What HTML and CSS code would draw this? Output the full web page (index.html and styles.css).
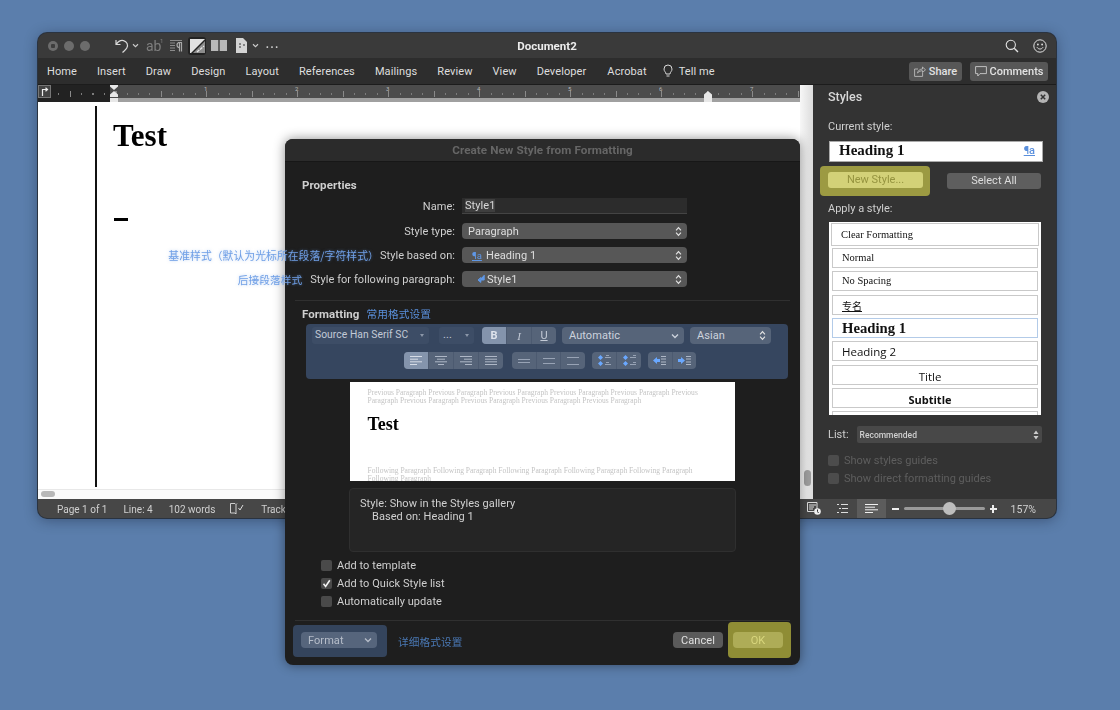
FILE: index.html
```html
<!DOCTYPE html>
<html lang="en">
<head>
<meta charset="UTF-8">
<title>Create New Style from Formatting</title>
<link rel="stylesheet" href="styles.css">
</head>
<body>
<svg class="defs" width="0" height="0">
    <symbol id="updown" viewBox="0 0 8 12"><path d="M1.200 4.600 4 1.600l2.800 3M1.200 7.400 4 10.400l2.800-3" fill="none" stroke="#e4e4e4" stroke-width="1.300"/></symbol>
    <symbol id="down" viewBox="0 0 8 6"><path d="M1 1.500 4 4.500l3-3" fill="none" stroke="currentColor" stroke-width="1.300"/></symbol>
</svg>

<div class="window">
    <div class="titlebar">
        <div class="tools">
            <span class="light light-close"></span><span class="light"></span><span class="light"></span>
            <svg class="t-undo" width="14" height="16" viewBox="0 0 14 16"><path d="M1 2v4.500h4.500M1.300 6.300C3.500 3 6 2 8.500 2.600 12 3.500 13.500 7 11.800 10 10.800 11.800 9 13 7.500 14.500" fill="none" stroke="#d8d8d8" stroke-width="1.200"/></svg>
            <svg class="t-chev" width="7" height="5"><use href="#down"/></svg>
            <span class="t-ab">ab<i>1</i></span>
            <svg class="t-para" width="14" height="14" viewBox="0 0 14 14"><path d="M1 1.500h12M1 4h5M1 6.500h5M1 9h5M1 11.500h5" stroke="#8a8a8a" stroke-width="1.200"/><path d="M9 3.500h4M10.500 3.500v9M12.500 3.500v9M10.500 3.500a2.500 2.500 0 0 0 0 5" fill="none" stroke="#a8a8a8" stroke-width="1.200"/></svg>
            <span class="t-active"><svg width="15" height="14" viewBox="0 0 15 14"><path d="M0 0h15L1 14H0z" fill="#e2e2e2"/><path d="M15 2v12H3z" fill="#8c8c8c"/><path d="M7 13l7-6" stroke="#e8e8e8" stroke-width="1.300" stroke-dasharray="3 1"/></svg></span>
            <svg class="t-cols" width="16" height="11" viewBox="0 0 16 11"><path d="M0 0h7.300v11H0zM8.700 0H16v11H8.700z" fill="#b8b8b8"/></svg>
            <svg class="t-doc" width="11" height="15" viewBox="0 0 11 15"><path d="M0 0h7l4 4v11H0z" fill="#d4d4d4"/><path d="M3 6h2M3 9h2M7 7h2" stroke="#333" stroke-width="1"/></svg>
            <svg class="t-chev2" width="7" height="5"><use href="#down"/></svg>
            <span class="t-dots">&#8943;</span>
        </div>
        <div class="doc-title">Document2</div>
        <div class="title-right">
            <svg width="14" height="14" viewBox="0 0 14 14"><circle cx="5.800" cy="5.800" r="4.600" fill="none" stroke="#e2e2e2" stroke-width="1.100"/><path d="M9.200 9.200 13 13" stroke="#e2e2e2" stroke-width="1.300"/></svg>
            <svg width="14" height="14" viewBox="0 0 14 14"><circle cx="7" cy="7" r="6.200" fill="none" stroke="#e2e2e2" stroke-width="1"/><circle cx="4.900" cy="5.500" r=".9" fill="#e2e2e2"/><circle cx="9.100" cy="5.500" r=".9" fill="#e2e2e2"/><path d="M4 8.300c1.500 2.300 4.500 2.300 6 0" fill="none" stroke="#e2e2e2" stroke-width="1"/></svg>
        </div>
    </div>

    <div class="ribbon">
        <span class="tab">Home</span><span class="tab">Insert</span><span class="tab">Draw</span><span class="tab">Design</span><span class="tab">Layout</span><span class="tab">References</span><span class="tab">Mailings</span><span class="tab">Review</span><span class="tab">View</span><span class="tab">Developer</span><span class="tab">Acrobat</span>
        <span class="tab tell"><svg width="10" height="14" viewBox="0 0 10 14"><path d="M3 10C3 8 1 7.500 1 5a4 4 0 0 1 8 0c0 2.500-2 3-2 5zM3.500 12h3" fill="none" stroke="#d8d8d8" stroke-width="1"/></svg>Tell me</span>
        <div class="ribbon-btns">
            <span class="rb-btn rb-share"><svg width="12" height="11" viewBox="0 0 12 11"><path d="M4 3H.6v7.400h8V7M3.500 7c.5-2.500 2.500-4 5-4V1l3 2.800-3 2.700V4.700C6.500 4.700 5 5.500 3.500 7z" fill="none" stroke="#bbb" stroke-width=".9"/></svg>Share</span>
            <span class="rb-btn rb-comments"><svg width="12" height="11" viewBox="0 0 12 11"><path d="M.6.6h10.800v7H5L2.800 10V7.600H.6z" fill="none" stroke="#ccc" stroke-width=".9"/></svg>Comments</span>
        </div>
    </div>

    <div class="main">
        <div class="doc-col">
            <div class="ruler">
                <span class="ruler-corner"><svg width="8" height="9" viewBox="0 0 8 9"><path d="M1.500 9V2.500H6M4.500.8 6.500 2.500 4.500 4.200" fill="none" stroke="#eee" stroke-width="1.200"/></svg></span>
                <span class="ruler-num">1</span><span class="ruler-num">2</span><span class="ruler-num">3</span><span class="ruler-num">4</span><span class="ruler-num">5</span><span class="ruler-num">6</span><span class="ruler-num">7</span>
                <svg class="marker marker-l" width="8" height="17" viewBox="0 0 8 17"><path d="M0 0h8v1.500L4 5 0 1.500zM4 6l4 3.500V12H0V9.500zM0 13h8v4H0z" fill="#e8e8e8"/></svg>
                <svg class="marker marker-r" width="8" height="17" viewBox="0 0 8 17"><path d="M4 6l4 3.500V17H0V9.500z" fill="#e8e8e8"/></svg>
            </div>
            <div class="page">
                <div class="margin-line"></div>
                <div class="page-text">
                    <h1 class="page-h">Test</h1>
                    <div class="page-dash"></div>
                </div>
            </div>
            <div class="hscroll"><span></span></div>
        </div>
        <div class="vscroll"><span></span></div>

        <div class="styles">
            <div class="styles-head"><span>Styles</span><svg width="12" height="12" viewBox="0 0 12 12"><circle cx="6" cy="6" r="6" fill="#b4b4b4"/><path d="M3.800 3.800l4.400 4.400M8.200 3.800 3.800 8.200" stroke="#333" stroke-width="1.500"/></svg></div>
            <div class="st-label st-current">Current style:</div>
            <div class="current-box"><span>Heading 1</span><a>&#182;a</a></div>
            <div class="st-btns">
                <span class="hl-new"><span class="new-btn">New Style...</span></span>
                <span class="sel-btn">Select All</span>
            </div>
            <div class="st-label st-apply">Apply a style:</div>
            <div class="style-list">
                <div class="si si-clear">Clear Formatting</div>
                <div class="si si-ser si-normal">Normal</div>
                <div class="si si-ser">No Spacing</div>
                <div class="si si-cjk">专名</div>
                <div class="si si-h1">Heading 1</div>
                <div class="si si-h2">Heading 2</div>
                <div class="si si-title">Title</div>
                <div class="si si-sub">Subtitle</div>
                <div class="si si-cut"></div>
            </div>
            <div class="list-row"><span>List:</span><span class="list-sel">Recommended<svg width="6" height="10" viewBox="0 0 6 10"><path d="M3 .5 5.500 4H.5zM3 9.500.5 6h5z" fill="#ccc"/></svg></span></div>
            <div class="guide"><i></i>Show styles guides</div>
            <div class="guide"><i></i>Show direct formatting guides</div>
        </div>
    </div>

    <div class="status">
        <span class="s-page">Page 1 of 1</span><span class="s-line">Line: 4</span><span class="s-words">102 words</span>
        <svg class="s-book" width="14" height="12" viewBox="0 0 14 12"><path d="M.5.500h4.500l1 1v9.500l-1-1H.5zM6 1.500 7 .500M6 11h0" fill="none" stroke="#ddd" stroke-width=".9"/><path d="M8.500 5l1.500 2 3-5" fill="none" stroke="#ddd" stroke-width="1"/></svg>
        <span class="s-track">Track Changes: Off</span>
        <div class="s-right">
            <svg class="s-ic1" width="14" height="13" viewBox="0 0 14 13"><path d="M.5.500h9.500v8" fill="none" stroke="#ddd"/><path d="M.5.500v9h7M2 3h7M2 5h5M2 7h4" stroke="#ddd" fill="none"/><circle cx="10.500" cy="9.500" r="3.300" fill="#eee"/><path d="M10.500 7.500v2l1 1.500" stroke="#333" fill="none"/></svg>
            <svg class="s-ic2" width="11" height="9" viewBox="0 0 11 9"><path d="M0 .500h2M4 .500h7M2 4.500h2M5 4.500h6M0 8.500h2M4 8.500h7" stroke="#ddd"/></svg>
            <span class="s-active"><svg width="13" height="9" viewBox="0 0 13 9"><path d="M0 .500h13M0 3.200h10M0 5.800h13M0 8.500h8" stroke="#f0f0f0"/></svg></span>
            <span class="z-minus"></span>
            <span class="slider"><span class="knob"></span></span>
            <span class="z-plus"></span>
            <span class="z-val">157%</span>
        </div>
    </div>
</div>

<div class="dialog">
    <div class="dlg-title">Create New Style from Formatting</div>
    <div class="section-h props-h">Properties</div>
    <div class="row row-name">
        <label class="lbl">Name:</label>
        <span class="name-field"><b>Style1</b></span>
    </div>
    <div class="row">
        <label class="lbl">Style type:</label>
        <span class="pop">Paragraph<svg width="7" height="11"><use href="#updown"/></svg></span>
    </div>
    <div class="row">
        <label class="lbl"><em class="note note-a">基准样式（默认为光标所在段落/字符样式）</em>Style based on:</label>
        <span class="pop"><i class="glyph">&#182;a</i>Heading 1<svg width="7" height="11"><use href="#updown"/></svg></span>
    </div>
    <div class="row">
        <label class="lbl"><em class="note note-b">后接段落样式</em>Style for following paragraph:</label>
        <span class="pop"><svg class="glyph-r" width="8" height="8" viewBox="0 0 8 8"><path d="M7.200 0v5H2M3.800 2.600 1 5l2.800 2.400z" fill="#5f97e6" stroke="#5f97e6"/></svg>Style1<svg width="7" height="11"><use href="#updown"/></svg></span>
    </div>
    <div class="rule rule-a"></div>
    <div class="section-h fmt-h">Formatting<em class="note note-c">常用格式设置</em></div>

    <div class="fmt-panel">
        <div class="fmt-row">
            <span class="ctl ctl-font">Source Han Serif SC<i class="tri"></i></span>
            <span class="ctl ctl-size">...<i class="tri"></i></span>
            <span class="seg seg-biu"><span class="on bold">B</span><span class="ital">I</span><span class="und">U</span></span>
            <span class="ctl2 ctl-color">Automatic<svg width="8" height="6"><use href="#down"/></svg></span>
            <span class="ctl2 ctl-asian">Asian<svg width="7" height="11"><use href="#updown"/></svg></span>
        </div>
        <div class="fmt-row fmt-row2">
            <span class="seg seg-align">
                <span class="on"><svg width="12" height="9" viewBox="0 0 12 9"><path d="M0 .500h12M0 3.200h8M0 5.800h12M0 8.500h7" stroke="#d5dbe5"/></svg></span>
                <span><svg width="12" height="9" viewBox="0 0 12 9"><path d="M0 .500h12M2 3.200h8M0 5.800h12M3 8.500h6" stroke="#aeb7c6"/></svg></span>
                <span><svg width="12" height="9" viewBox="0 0 12 9"><path d="M0 .500h12M4 3.200h8M0 5.800h12M5 8.500h7" stroke="#aeb7c6"/></svg></span>
                <span><svg width="12" height="9" viewBox="0 0 12 9"><path d="M0 .500h12M0 3.200h12M0 5.800h12M0 8.500h12" stroke="#aeb7c6"/></svg></span>
            </span>
            <span class="seg seg-space">
                <span><svg width="12" height="4" viewBox="0 0 12 4"><path d="M0 .500h12M0 3.500h12" stroke="#98a3b5"/></svg></span>
                <span><svg width="12" height="6" viewBox="0 0 12 6"><path d="M0 .500h12M0 5.500h12" stroke="#98a3b5"/></svg></span>
                <span><svg width="12" height="8" viewBox="0 0 12 8"><path d="M0 .500h12M0 7.500h12" stroke="#98a3b5"/></svg></span>
            </span>
            <span class="seg seg-para">
                <span><svg width="13" height="11" viewBox="0 0 13 11"><path d="M2.500 0 5 2.500 2.500 5 0 2.500zM2.500 6 5 8.500 2.500 11 0 8.500z" fill="#6aa8ff"/><path d="M8 .5h3M7 2.500h6M8 7.500h3M7 9.500h6" stroke="#98a3b5"/></svg></span>
                <span><svg width="13" height="11" viewBox="0 0 13 11"><path d="M2.500 0 5 2.500 2.500 5 0 2.500zM2.500 6 5 8.500 2.500 11 0 8.500z" fill="#6aa8ff"/><path d="M10 .5h3M7 2.500h6M10 7.500h3M7 9.500h6" stroke="#98a3b5"/></svg></span>
            </span>
            <span class="seg seg-ind">
                <span><svg width="13" height="9" viewBox="0 0 13 9"><path d="M0 4.500 4 1v2h3v3H4v2z" fill="#6aa8ff"/><path d="M8 .500h5M8 3h5M8 6h5M8 8.500h5" stroke="#aeb7c6"/></svg></span>
                <span><svg width="13" height="9" viewBox="0 0 13 9"><path d="M7 4.500 3 1v2H0v3h3v2z" fill="#6aa8ff"/><path d="M8 .500h5M8 3h5M8 6h5M8 8.500h5" stroke="#aeb7c6"/></svg></span>
            </span>
        </div>
    </div>

    <div class="preview">
        <p class="pv-grey">Previous Paragraph Previous Paragraph Previous Paragraph Previous Paragraph Previous Paragraph Previous Paragraph Previous Paragraph Previous Paragraph Previous Paragraph Previous Paragraph</p>
        <div class="pv-h">Test</div>
        <p class="pv-grey pv-follow">Following Paragraph Following Paragraph Following Paragraph Following Paragraph Following Paragraph Following Paragraph</p>
    </div>

    <div class="desc">
        <div>Style: Show in the Styles gallery</div>
        <div class="desc-in">Based on: Heading 1</div>
    </div>

    <div class="checks">
        <div class="check"><i></i>Add to template</div>
        <div class="check"><i class="on"><svg width="9" height="9" viewBox="0 0 9 9"><path d="M1.500 4.800 3.600 7.500 7.800 1.200" fill="none" stroke="#f2f2f2" stroke-width="1.600"/></svg></i>Add to Quick Style list</div>
        <div class="check"><i></i>Automatically update</div>
    </div>

    <div class="rule rule-b"></div>
    <div class="dlg-foot">
        <span class="hl-format"><span class="format-btn">Format<svg width="8" height="6"><use href="#down"/></svg></span></span>
        <em class="note note-d">详细格式设置</em>
        <span class="cancel-btn">Cancel</span>
        <span class="hl-ok"><span class="ok-btn">OK</span></span>
    </div>
</div>
</body>
</html>
```

FILE: styles.css
```css
*{
    box-sizing: border-box;
}
html, body{
    margin: 0;
    height: 100%;
}
body{
    width: 1120px;
    height: 710px;
    overflow: hidden;
    position: relative;
    background: #5b7eac;
    font-family: Roboto, "Noto Sans CJK SC", sans-serif;
    font-size: 11px;
    color: #dcdcdc;
    filter: blur(.5px);
}
.defs{
    position: absolute;
}
em, i{
    font-style: normal;
}
.window{
    position: absolute;
    left: 38px;
    top: 33px;
    width: 1018px;
    height: 485px;
    border-radius: 9px;
    overflow: hidden;
    display: flex;
    flex-direction: column;
    background: #333;
    box-shadow: 0 0 0 1px #2a3340, 0 2px 14px rgba(20,30,50,.45);
}

/* title bar */
.titlebar{
    height: 25px;
    background: #3a3a3a;
    display: grid;
    grid-template-columns: 1fr auto 1fr;
    align-items: center;
}
.tools{
    display: flex;
    align-items: center;
    padding-left: 10px;
}
.light{
    width: 10px;
    height: 10px;
    border-radius: 50%;
    background: #6c6c6c;
    margin-right: 6px;
}
.light-close{
    background: radial-gradient(#3d3d3d 0 2px, #6c6c6c 2.500px);
}
.t-undo{
    margin-left: 19px;
}
.t-chev{
    margin-left: 3px;
    color: #ccc;
}
.t-ab{
    margin-left: 7px;
    color: #7e7e7e;
    font-size: 14px;
    width: 16px;
    position: relative;
}
.t-ab i{
    position: absolute;
    font-size: 6px;
    top: -1px;
    left: 14px;
}
.t-para{
    margin-left: 7px;
}
.t-active{
    margin-left: 5px;
    width: 18px;
    height: 18px;
    border-radius: 3px;
    background: #222;
    display: flex;
    align-items: center;
    justify-content: center;
}
.t-cols{
    margin-left: 5px;
}
.t-doc{
    margin-left: 9px;
}
.t-chev2{
    margin-left: 5px;
    color: #ccc;
}
.t-dots{
    margin-left: 6px;
    font-size: 14px;
    color: #ddd;
}
.doc-title{
    font-weight: 700;
    font-size: 11.500px;
    color: #ececec;
}
.title-right{
    display: flex;
    justify-content: flex-end;
    gap: 14px;
    padding-right: 9px;
}

/* ribbon */
.ribbon{
    height: 27px;
    background: #2d2d2d;
    display: flex;
    align-items: center;
    padding-left: 9px;
    font-size: 11px;
    border-bottom: 1px solid #1c1c1c;
}
.tab{
    margin-right: 20px;
    color: #dedede;
    letter-spacing: .1px;
}
.tab:nth-child(10){
    margin-right: 21px;
}
.tell{
    display: flex;
    align-items: center;
    gap: 6px;
    margin-left: -4px;
    margin-right: 0;
}
.ribbon-btns{
    margin-left: auto;
    margin-right: 8px;
    display: flex;
    gap: 8px;
}
.rb-btn{
    height: 19px;
    background: #575757;
    border-radius: 3px;
    display: flex;
    align-items: center;
    justify-content: center;
    gap: 3px;
    font-weight: 500;
    color: #e2e2e2;
}
.rb-share{
    width: 53px;
}
.rb-comments{
    width: 78px;
}

/* document area */
.main{
    flex: 1;
    display: flex;
    min-height: 0;
}
.doc-col{
    width: 762px;
    display: flex;
    flex-direction: column;
}
.ruler{
    height: 17px;
    position: relative;
    display: flex;
    padding-left: 123px;
    background:
        linear-gradient(#a0a0a0, #a0a0a0) 72px 13px / 100% 4px no-repeat,
        repeating-linear-gradient(90deg, #8a8a8a 0 1px, transparent 1px 45.500px) 31.500px 6px / 100% 6px no-repeat,
        repeating-linear-gradient(90deg, #7c7c7c 0 1px, transparent 1px 11.375px) 8.750px 8px / 100% 2px no-repeat,
        linear-gradient(90deg, #222 0 72px, #4c4c4c 72px);
}
.ruler-corner{
    position: absolute;
    left: 0;
    top: 0;
    width: 13px;
    height: 13px;
    background: #444;
    border: 1px solid #777;
    display: flex;
    align-items: center;
    justify-content: center;
}
.ruler-num{
    width: 91px;
    font-size: 6px;
    line-height: 6px;
    padding-top: 1px;
    padding-left: 43px;
    color: #bbb;
}
.marker{
    position: absolute;
    top: 0;
}
.marker-l{
    left: 72px;
}
.marker-r{
    left: 666px;
}
.page{
    flex: 1;
    background: #fff;
    display: flex;
    padding: 4px 0 2px 57px;
    min-height: 0;
}
.margin-line{
    width: 2px;
    background: #111;
}
.page-text{
    padding-left: 16px;
    color: #000;
}
.page-h{
    margin: 13px 0 0;
    font: 700 31px/34px "Liberation Serif", serif;
}
.page-dash{
    width: 14px;
    height: 3px;
    background: #000;
    margin-top: 65px;
    margin-left: 1px;
}
.hscroll{
    height: 10px;
    background: #fafafa;
    border-top: 1px solid #e8e8e8;
    padding: 1px 0 0 3px;
}
.hscroll span{
    display: block;
    width: 14px;
    height: 6px;
    border-radius: 3px;
    background: #b8b8b8;
}
.vscroll{
    width: 13px;
    background: linear-gradient(90deg, #f7f7f7, #dcdcdc);
    padding: 385px 0 0 4px;
}
.vscroll span{
    display: block;
    width: 7px;
    height: 16px;
    border-radius: 4px;
    background: #9e9e9e;
}

/* styles pane */
.styles{
    flex: 1;
    background: #333;
    padding: 0 13px 0 15px;
    font-size: 11px;
    color: #cfcfcf;
}
.styles-head{
    display: flex;
    justify-content: space-between;
    align-items: center;
    height: 23px;
    margin-right: -6px;
    font-size: 12.500px;
    font-weight: 500;
    color: #d8d8d8;
}
.st-current{
    margin-top: 12px;
    line-height: 13px;
}
.current-box{
    margin-top: 8px;
    margin-left: 1px;
    height: 21px;
    width: 214px;
    background: #fff;
    border: 1px solid #aaa;
    padding: 0 7px 2px 9px;
    display: flex;
    justify-content: space-between;
    align-items: center;
    font: 700 15px "Liberation Serif", serif;
    color: #111;
}
.current-box a{
    font: 500 11px Roboto, sans-serif;
    color: #5a8fdc;
    text-decoration: underline;
}
.st-btns{
    display: flex;
    align-items: center;
    justify-content: space-between;
    margin-top: 4px;
    margin-left: -8px;
    width: 221px;
}
.hl-new{
    width: 110px;
    height: 30px;
    background: #9c9a42;
    border-radius: 4px;
    padding: 6px 7px 0 8px;
}
.new-btn{
    display: block;
    height: 16px;
    background: #d3d178;
    border-radius: 3px;
    color: #95933f;
    text-align: center;
    line-height: 16px;
}
.sel-btn{
    width: 94px;
    height: 16px;
    background: #5e5e5e;
    border-radius: 3px;
    text-align: center;
    line-height: 16px;
    color: #dcdcdc;
}
.st-apply{
    margin-top: 6px;
    line-height: 14px;
}
.style-list{
    margin-top: 6px;
    margin-left: 1px;
    width: 212px;
    height: 193px;
    background: #fff;
    padding: 1px 2px;
    overflow: hidden;
    color: #111;
    display: flex;
    flex-direction: column;
    gap: 3.330px;
}
.si{
    flex: none;
    height: 20px;
    border: 1px solid #c9c9c9;
    margin: 0 1px;
    padding-left: 9px;
    line-height: 18px;
    font-family: "Liberation Serif", serif;
    font-size: 10.500px;
    font-weight: 500;
    white-space: nowrap;
}
.si-clear{
    height: 23px;
    margin: 0;
    line-height: 21px;
}
.si-normal{
    margin-top: -1.300px;
}
.si-cjk{
    font-family: "Noto Sans CJK SC", sans-serif;
    text-decoration: underline;
    font-size: 10px;
    font-weight: 400;
    line-height: 19px;
}
.si-h1{
    border-color: #b3cbe8;
    font-weight: 700;
    font-size: 14.700px;
}
.si-h2{
    font-family: "Open Sans", sans-serif;
    font-size: 11.500px;
    font-weight: 400;
    line-height: 20px;
}
.si-title{
    font-family: "Open Sans", sans-serif;
    font-size: 11.500px;
    font-weight: 400;
    text-align: center;
    padding: 0 10px 0 0;
    line-height: 21px;
}
.si-sub{
    font-family: "Open Sans", sans-serif;
    font-size: 11px;
    font-weight: 700;
    text-align: center;
    padding: 0 10px 0 0;
    line-height: 21px;
}
.list-row{
    margin-top: 11px;
    display: flex;
    align-items: center;
    gap: 8px;
}
.list-sel{
    width: 185px;
    height: 17px;
    background: #484848;
    border-radius: 2px;
    padding: 0 3px 0 3px;
    font-size: 8.500px;
    font-weight: 500;
    display: flex;
    align-items: center;
    justify-content: space-between;
}
.guide{
    display: flex;
    align-items: center;
    gap: 5px;
    height: 18px;
    color: #5e5e5e;
}
.list-row + .guide{
    margin-top: 8px;
}
.guide i{
    width: 11px;
    height: 11px;
    border-radius: 2px;
    background: #4c4c4c;
}

/* status bar */
.status{
    height: 19px;
    background: #474747;
    display: flex;
    align-items: center;
    padding-left: 19px;
    font-size: 10px;
    color: #d0d0d0;
    white-space: nowrap;
}
.s-page, .s-line, .s-words, .s-track, .z-val{
    padding-top: 1px;
}
.s-line, .s-words{
    margin-left: 16px;
}
.s-book{
    margin-left: 15px;
}
.s-track{
    margin-left: 17px;
}
.s-right{
    margin-left: auto;
    padding-right: 20px;
    display: flex;
    align-items: center;
    height: 19px;
}
.s-ic2{
    margin-left: 16px;
}
.s-active{
    margin-left: 9px;
    width: 29px;
    height: 19px;
    background: #5c5c5c;
    display: flex;
    align-items: center;
    justify-content: center;
}
.z-minus, .z-plus{
    position: relative;
    width: 7px;
    height: 2px;
    background: #eee;
    margin-left: 6px;
}
.z-plus{
    margin-left: 5px;
}
.z-plus::after{
    content: "";
    position: absolute;
    left: 2.500px;
    top: -3px;
    width: 2px;
    height: 8px;
    background: #eee;
}
.slider{
    position: relative;
    margin-left: 5px;
    width: 81px;
    height: 3px;
    border-radius: 2px;
    background: #9a9a9a;
}
.knob{
    position: absolute;
    left: 39px;
    top: -5px;
    width: 13px;
    height: 13px;
    border-radius: 50%;
    background: #bdbdbd;
}
.z-val{
    margin-left: 14px;
    font-size: 10.500px;
}

/* dialog */
.dialog{
    position: absolute;
    left: 285px;
    top: 139px;
    width: 515px;
    height: 526px;
    border-radius: 8px;
    background: #1e1e1e;
    box-shadow: 0 0 12px rgba(0,0,0,.45);
    font-size: 11px;
    letter-spacing: .06px;
    color: #cfcfcf;
}
.dlg-title{
    height: 23px;
    background: #2b2b2b;
    border-radius: 8px 8px 0 0;
    border-bottom: 1px solid #171717;
    text-align: center;
    line-height: 23px;
    font-size: 11.700px;
    font-weight: 700;
    color: #666;
}
.section-h{
    font-weight: 700;
    font-size: 11.500px;
    color: #cfcfcf;
    padding-left: 17px;
    line-height: 14px;
}
.props-h{
    margin-top: 16px;
}
.row{
    display: flex;
    align-items: center;
    height: 16px;
    margin-top: 8px;
}
.row-name{
    margin-top: 6px;
    margin-bottom: 9px;
}
.lbl{
    width: 170px;
    flex: none;
    display: flex;
    justify-content: flex-end;
    white-space: nowrap;
    align-items: center;
    color: #cfcfcf;
}
.name-field{
    margin-left: 7px;
    width: 225px;
    height: 16px;
    background: #2c2c2c;
    border-bottom: 1px solid #444;
    padding-left: 3px;
    line-height: 15px;
    color: #d8d8d8;
}
.name-field b{
    font-weight: 400;
    background: #3f3f3f;
}
.pop{
    margin-left: 7px;
    width: 225px;
    height: 16px;
    background: #575757;
    border-radius: 4px;
    padding: 0 5px 0 6px;
    display: flex;
    align-items: center;
    color: #dedede;
}
.pop svg{
    margin-left: auto;
}
.glyph{
    color: #5f97e6;
    font-size: 9.500px;
    text-decoration: underline;
    width: 14px;
    margin-left: 4px;
}
.pop .glyph-r{
    margin: 0 2px 0 9px;
}
.note{
    color: #5a90dc;
    font-size: 10.700px;
    font-family: "Noto Sans CJK SC", sans-serif;
    font-weight: 400;
}
.note-a, .note-b{
    color: #6f9fe6;
    text-shadow: 0 0 3px rgba(111,159,230,.5);
}
.note-a{
    font-size: 10.800px;
    margin-right: 1px;
}
.note-b{
    margin-right: 8px;
}
.note-c{
    margin-left: 7px;
}
.rule{
    height: 1px;
    background: #303030;
    margin-left: 10px;
    width: 495px;
}
.rule-a{
    margin-top: 13px;
}
.fmt-h{
    margin-top: 6px;
}
.fmt-panel{
    margin: 3px 0 0 21px;
    width: 482px;
    height: 55px;
    background: #36465f;
    border-radius: 4px;
    padding: 3px 0 0 6px;
}
.fmt-row{
    display: flex;
    height: 17px;
    color: #c3cad6;
}
.fmt-row2{
    margin-top: 8px;
    padding-left: 92px;
}
.ctl{
    position: relative;
    height: 17px;
    border-radius: 3px;
    background: #3d4d66;
    padding-left: 3px;
    line-height: 16px;
}
.ctl-font{
    width: 117px;
    font-size: 10.300px;
}
.ctl-size{
    width: 35px;
    margin-left: 10px;
    padding-left: 4px;
}
.tri{
    position: absolute;
    right: 5px;
    top: 7px;
    border: 2.500px solid transparent;
    border-top: 3px solid #8b96a8;
    border-bottom: 0;
}
.seg{
    display: flex;
    height: 17px;
    background: #566479;
    border-radius: 4px;
    overflow: hidden;
}
.seg > span{
    flex: 1;
    display: flex;
    align-items: center;
    justify-content: center;
    border-left: 1px solid #4c5a70;
}
.seg > span:first-child{
    border-left: 0;
}
.seg .on{
    background: #8494ac;
}
.seg-biu{
    width: 74px;
    margin-left: 8px;
}
.bold{
    font-weight: 700;
    color: #dfe4ec;
}
.ital{
    font-style: italic;
    font-family: "Liberation Serif", serif;
}
.und{
    text-decoration: underline;
}
.ctl2{
    height: 17px;
    background: #566479;
    border-radius: 4px;
    padding: 0 5px 0 7px;
    display: flex;
    align-items: center;
    justify-content: space-between;
    color: #cdd3dd;
}
.ctl-color{
    width: 122px;
    margin-left: 6px;
}
.ctl-asian{
    width: 81px;
    margin-left: 6px;
}
.seg-align{
    width: 99px;
}
.seg-space{
    width: 73px;
    margin-left: 9px;
}
.seg-para{
    width: 49px;
    margin-left: 7px;
}
.seg-ind{
    width: 48px;
    margin-left: 7px;
}
.preview{
    margin: 3px 0 0 64.500px;
    width: 385.500px;
    height: 99px;
    background: #fff;
    overflow: hidden;
    padding: 7px 36px 0 18px;
    font-family: "Liberation Serif", serif;
    letter-spacing: 0;
    color: #000;
}
.pv-grey{
    margin: 0;
    font-size: 7.550px;
    line-height: 8px;
    color: #c4c4c4;
}
.pv-h{
    margin-top: 8px;
    font-weight: 700;
    font-size: 18px;
    line-height: 22px;
}
.pv-follow{
    margin-top: 32px;
}
.desc{
    margin: 7px 0 0 64px;
    width: 387px;
    height: 64px;
    background: #252525;
    border: 1px solid #2f2f2f;
    border-radius: 4px;
    padding: 8px 10px;
    line-height: 13px;
    color: #d0d0d0;
}
.desc-in{
    padding-left: 12px;
}
.checks{
    margin: 4px 0 0 36px;
}
.check{
    height: 18px;
    display: flex;
    align-items: center;
    gap: 5px;
    color: #cfcfcf;
}
.check i{
    width: 11px;
    height: 11px;
    border-radius: 2px;
    background: #4a4a4a;
    display: flex;
    align-items: center;
    justify-content: center;
}
.rule-b{
    margin-top: 10px;
}
.dlg-foot{
    display: flex;
    align-items: flex-start;
    padding: 1px 9px 0 8px;
    height: 38px;
}
.hl-format{
    width: 94px;
    height: 32px;
    margin-top: 3px;
    background: #34445c;
    border-radius: 4px;
    padding: 7px 10px 0 8px;
}
.format-btn{
    height: 16px;
    background: #56657c;
    border-radius: 4px;
    padding: 0 5px 0 7px;
    display: flex;
    align-items: center;
    justify-content: space-between;
    color: #b6bdc9;
}
.note-d{
    margin: 12px 0 0 11px;
    color: #4a78b4;
}
.cancel-btn{
    margin: 10px 0 0 auto;
    width: 50px;
    height: 16px;
    background: #5a5a5a;
    border-radius: 4px;
    text-align: center;
    line-height: 17px;
    color: #e0e0e0;
}
.hl-ok{
    margin-left: 5px;
    width: 63px;
    height: 36px;
    background: #8f8d35;
    border-radius: 4px;
    padding: 10px 8px 0 5px;
}
.ok-btn{
    display: block;
    height: 16px;
    background: #aeac57;
    border-radius: 4px;
    text-align: center;
    line-height: 17px;
    color: #d8d67c;
}
```
